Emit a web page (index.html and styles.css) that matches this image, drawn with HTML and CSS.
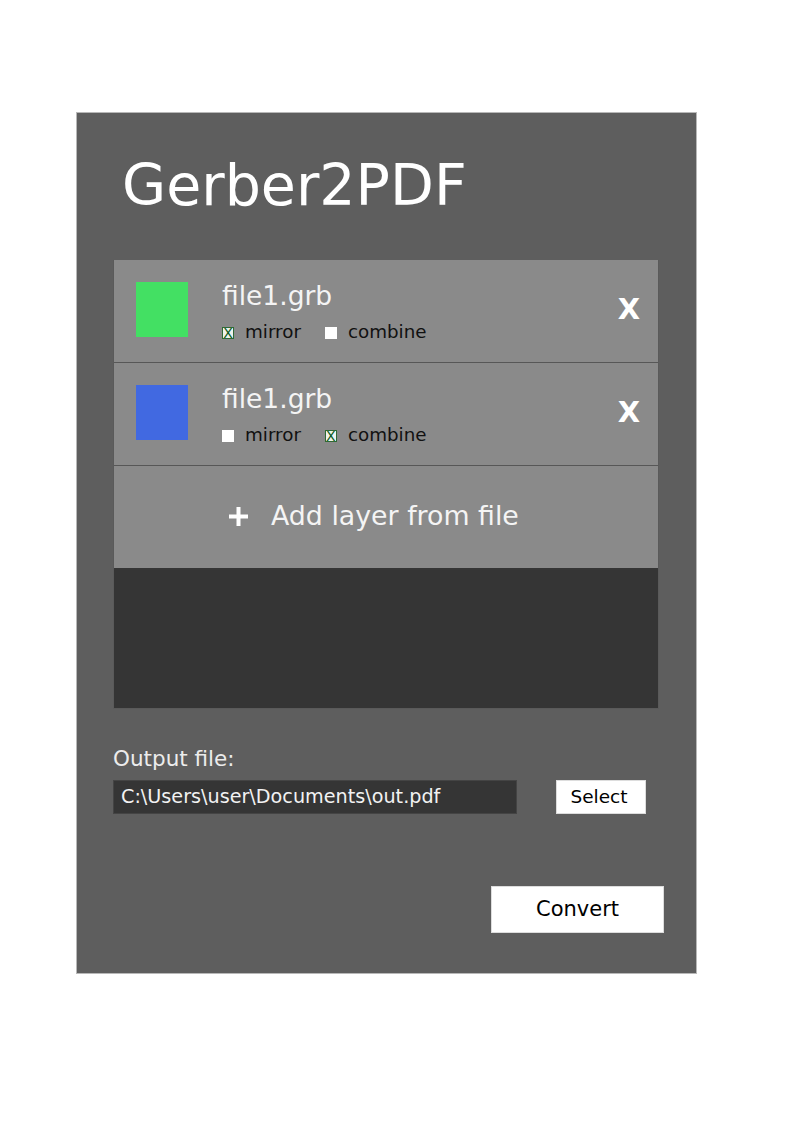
FILE: index.html
```html
<!DOCTYPE html>
<html>
<head>
<meta charset="utf-8">
<title>Gerber2PDF</title>
<link rel="stylesheet" href="styles.css">
</head>
<body>
<div class="panel">
  <h1 class="title">Gerber2PDF</h1>
  <div class="list">
    <div class="row">
      <div class="swatch swatch-green"></div>
      <div class="info">
        <div class="filename">file1.grb</div>
        <div class="options">
          <span class="opt"><span class="box box-checked">X</span>mirror</span>
          <span class="opt"><span class="box"></span>combine</span>
        </div>
      </div>
      <div class="close">X</div>
    </div>
    <div class="row">
      <div class="swatch swatch-blue"></div>
      <div class="info">
        <div class="filename">file1.grb</div>
        <div class="options">
          <span class="opt"><span class="box"></span>mirror</span>
          <span class="opt"><span class="box box-checked">X</span>combine</span>
        </div>
      </div>
      <div class="close">X</div>
    </div>
    <div class="add-row">
      <svg class="plus" width="19" height="19" viewBox="0 0 19 19"><rect x="7.5" y="0" width="4" height="19" fill="#fff"/><rect x="0" y="7.5" width="19" height="4" fill="#fff"/></svg>
      <span class="add-text">Add layer from file</span>
    </div>
    <div class="empty"></div>
  </div>
  <div class="label">Output file:</div>
  <div class="output-row">
    <div class="path">C:\Users\user\Documents\out.pdf</div>
    <div class="btn-select">Select</div>
  </div>
  <div class="actions">
    <div class="btn-convert">Convert</div>
  </div>
</div>
</body>
</html>
```
FILE: styles.css
```css
html, body {
  margin: 0;
  padding: 0;
  background: #ffffff;
}
body {
  font-family: "DejaVu Sans", Verdana, sans-serif;
}
.panel {
  margin: 112px 0 0 76px;
  width: 621px;
  height: 862px;
  box-sizing: border-box;
  background: #5e5e5e;
  border: 1px solid #b8b8b8;
  padding: 44px 37px 0 36px;
}
.title {
  margin: 0 0 47px 9px;
  font-weight: normal;
  font-size: 57px;
  line-height: 56px;
  color: #ffffff;
}
.list {
  width: 546px;
  box-sizing: border-box;
  border: 1px solid #5a5a5a;
  border-top: 0;
  background: #353535;
}
.row {
  display: flex;
  align-items: flex-start;
  height: 103px;
  box-sizing: border-box;
  padding: 22px 0 0 22px;
  background: #8a8a8a;
  border-bottom: 1px solid #575757;
}
.swatch {
  width: 52px;
  height: 55px;
  flex: none;
}
.swatch-green { background: #43e063; }
.swatch-blue { background: #4169e1; }
.info {
  margin: -1px 0 0 34px;
}
.filename {
  font-size: 26.5px;
  line-height: 30px;
  color: #f4f4f4;
}
.options {
  display: flex;
  margin-top: 10px;
  font-size: 18.3px;
  line-height: 22px;
  color: #111111;
}
.opt {
  display: flex;
  align-items: center;
  margin-right: 24px;
}
.box {
  width: 12px;
  height: 12px;
  box-sizing: border-box;
  background: #ffffff;
  margin: 2px 11px 0 0;
  display: flex;
  align-items: center;
  justify-content: center;
  font-size: 14px;
  line-height: 1;
  color: #0b5a1c;
}
.box-checked {
  background: #eef3ee;
  border: 1px solid #2f6a35;
}
.close {
  margin: 13px 18px 0 auto;
  font-size: 29px;
  line-height: 29px;
  font-weight: bold;
  color: #ffffff;
}
.add-row {
  display: flex;
  align-items: center;
  height: 102px;
  box-sizing: border-box;
  padding: 0 0 3px 115px;
  background: #8a8a8a;
}
.plus {
  display: block;
  flex: none;
  margin: 2px 23px 0 0;
}
.add-text {
  font-size: 26.8px;
  color: #f4f4f4;
}
.empty {
  height: 140px;
  background: #353535;
}
.label {
  margin-top: 38px;
  font-size: 21.5px;
  line-height: 24px;
  color: #ececec;
}
.output-row {
  display: flex;
  align-items: flex-start;
  margin-top: 9px;
}
.path {
  width: 404px;
  height: 34px;
  box-sizing: border-box;
  padding-left: 7px;
  background: #353535;
  border: 1px solid #444444;
  font-size: 19.2px;
  line-height: 32px;
  color: #f2f2f2;
}
.btn-select {
  margin-left: 39px;
  width: 90px;
  height: 34px;
  box-sizing: border-box;
  padding-right: 4px;
  background: #ffffff;
  border: 1px solid #dddddd;
  font-size: 18.5px;
  line-height: 32px;
  text-align: center;
  color: #000000;
}
.actions {
  display: flex;
  justify-content: flex-end;
  margin: 72px -5px 0 0;
}
.btn-convert {
  width: 173px;
  height: 47px;
  box-sizing: border-box;
  background: #ffffff;
  border: 1px solid #dddddd;
  font-size: 21px;
  line-height: 45px;
  text-align: center;
  color: #000000;
}
```
